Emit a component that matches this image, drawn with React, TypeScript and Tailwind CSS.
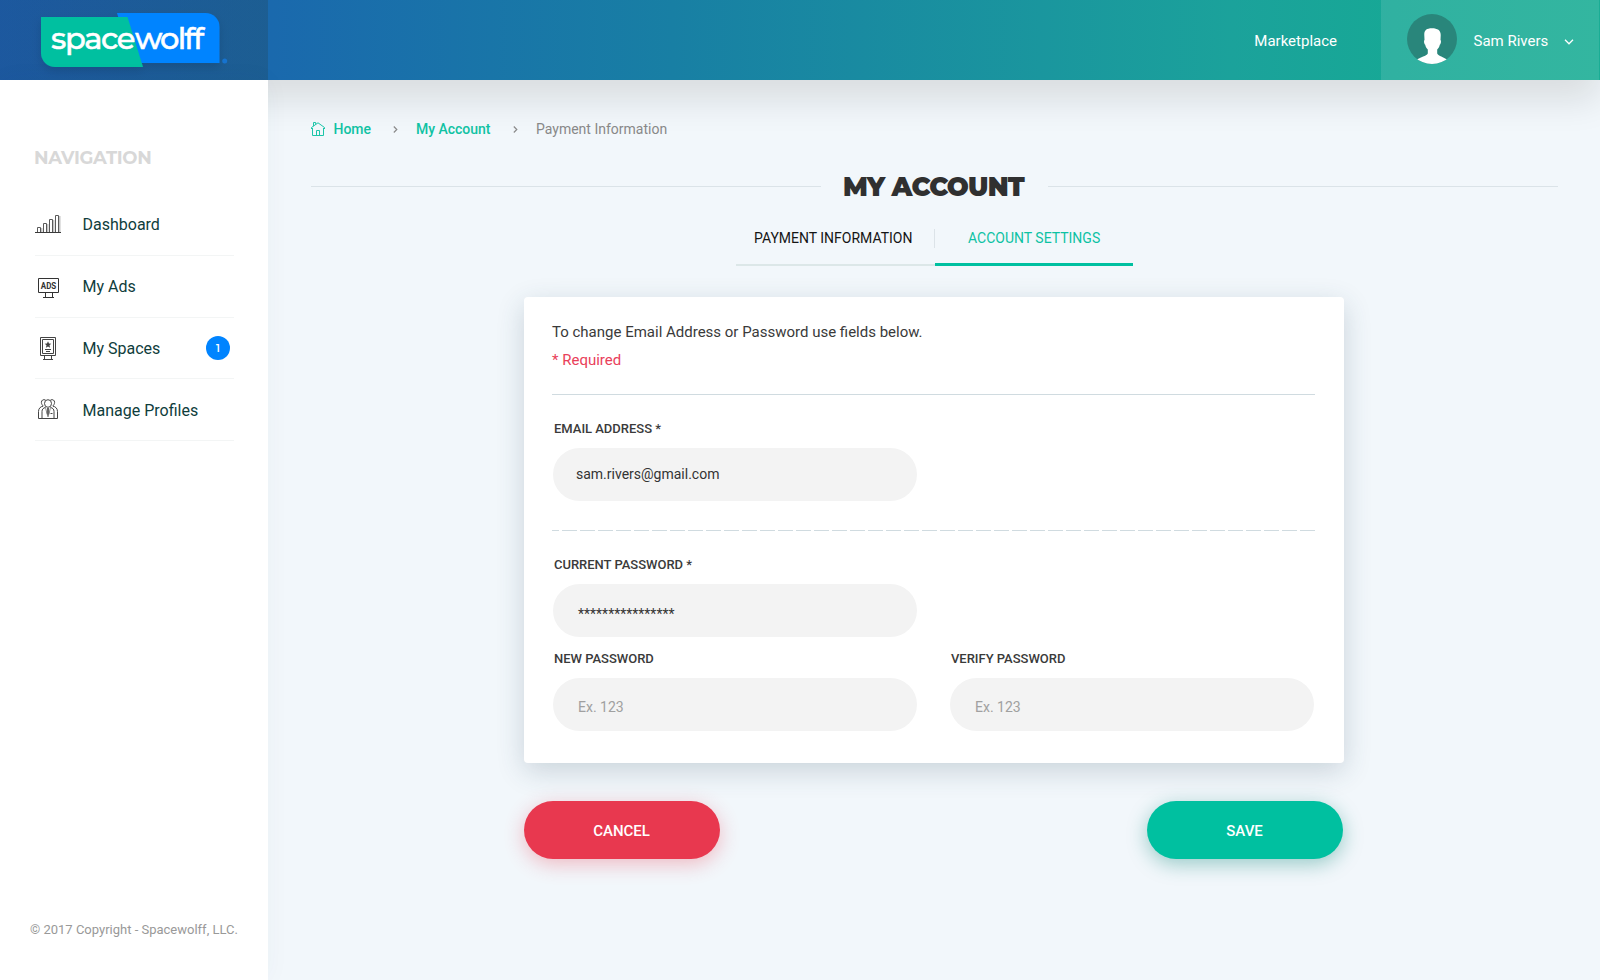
import React from "react";

function Logo() {
  return (
    <svg width="268" height="80" viewBox="0 0 268 80" aria-label="spacewolff">
      <defs>
        <filter id="logoShadow" x="-20%" y="-30%" width="140%" height="180%">
          <feDropShadow dx="0" dy="4" stdDeviation="5" floodColor="#000" floodOpacity="0.12" />
        </filter>
      </defs>
      <g filter="url(#logoShadow)">
        <path d="M117 13H205.500a14 14 0 0 1 14 14V63H133Z" fill="#0084ff" />
        <path d="M41 17H127.500L143 67H55a14 14 0 0 1-14-14Z" fill="#00c0a0" />
      </g>
      <g className="[font-variant-ligatures:none]" fontFamily="Montserrat, Inter, sans-serif" fontWeight="500" fontSize="30.500" fill="#fff" stroke="#fff" strokeWidth="0.500">
        <text x="51" y="48.500" textLength="84.500" lengthAdjust="spacing">space</text>
        <text x="135" y="48.500" textLength="69" lengthAdjust="spacing">wolff</text>
      </g>
      <circle cx="224.700" cy="61" r="2.500" fill="#1673cf" />
    </svg>
  );
}

function BarsIcon() {
  return (
    <svg className="mb-[2px]" width="26" height="18" viewBox="0 0 26 18" fill="none">
      <path d="M6 13h1.500v4H6zM12 9h1.500v8H12zM18 5h1.500v12H18zM24 1h1.500v16H24z" fill="#c4c4c4" />
      <path d="M2.500 17v-4.500h3V17M8.500 17V8.500h3V17M14.500 17V4.500h3V17M20.500 17V.5h3V17" stroke="#5a5a5a" />
      <path d="M0 17.500h26" stroke="#3a3a3a" />
    </svg>
  );
}

function AdsIcon() {
  return (
    <svg className="mt-[2px] ml-[2px]" width="22" height="20" viewBox="0 0 22 20" fill="none" stroke="#333">
      <path d="M.5.5h20v14H.5zM7.500 15v4M14.500 15v4M5 19.500h11" />
      <text x="2.800" y="10.800" fontFamily="Roboto, sans-serif" fontWeight="700" fontSize="9" textLength="15.500" lengthAdjust="spacingAndGlyphs" fill="#333" stroke="none">ADS</text>
    </svg>
  );
}

function SpacesIcon() {
  return (
    <svg className="mt-px" width="16" height="23" viewBox="0 0 16 23" fill="none" stroke="#444">
      <path d="M.5.5h15v18H.5zM2.500 2.500h11v14h-11zM4.500 19v3M11.500 19v3M3 22.500h10M5 12.500h6M6 14.500h4" />
      <path d="M8 4.300l1 2.300 2.300.2-1.800 1.500.6 2.400L8 9.400l-2.100 1.300.6-2.400-1.800-1.500 2.300-.2z" fill="#444" stroke="none" />
    </svg>
  );
}

function ProfilesIcon() {
  return (
    <svg className="mb-px" width="20" height="20" viewBox="0 0 20 20" fill="none" stroke="#444">
      <ellipse cx="10" cy="4.500" rx="3.500" ry="3.800" />
      <path d="M7.500 1C5.300 0 3.300 1.200 3.400 3.500c.1 1.500.8 2.500 1.800 3.500M12.500 1c2.200-1 4.200.2 4.100 2.500-.1 1.500-.8 2.500-1.800 3.500" />
      <path d="M5.200 7.200C2.500 7.500.5 9.500.5 12.500v7h19v-7c0-3-2-5-4.700-5.300" />
      <path d="M4 19v-6.500c0-2.300 1.200-3.500 3.500-4M16 19v-6.500c0-2.300-1.200-3.500-3.500-4" />
      <path d="M12.500 14.500h2" />
      <path d="M7.300 8.500L10 18l2.700-9.500" strokeOpacity="0.500" />
      <path d="M9 9h2l.5 5L10 17.500 8.500 14z" fill="#666" stroke="none" />
    </svg>
  );
}

function HomeIcon() {
  return (
    <svg width="14" height="14" viewBox="0 0 14 14" fill="none" stroke="#1cc5a8">
      <path d="M.5 7V5.500L7 .8l6.500 4.700V7M1.500 6v7.500h11V6M2.500 4.200V.5h2.200v2M5.500 13.500v-5h3v5" />
    </svg>
  );
}

function Crumb() {
  return (
    <svg width="5" height="8" viewBox="0 0 5 8" fill="none" stroke="#8a8a8a" strokeWidth="1.200">
      <path d="M.8 1.500l3 3-3 3" />
    </svg>
  );
}

function Avatar() {
  return (
    <svg width="50" height="50" viewBox="0 0 50 50">
      <defs>
        <clipPath id="avatarClip">
          <circle cx="25" cy="25" r="25" />
        </clipPath>
      </defs>
      <circle cx="25" cy="25" r="25" fill="#29867b" />
      <path
        clipPath="url(#avatarClip)"
        d="M25 14.300c5.800 0 9 2.300 8.700 7.200l-.2 4.500c.8.300.6 3.700-.7 4.800-.4 2-1.400 3.500-2.600 4.700v4c1.500 2.800 6.300 3.500 9.800 6V51H10v-5.500c3.500-2.500 9.300-3.200 10.800-6v-4c-1.200-1.200-2.200-2.700-2.600-4.700-1.300-1.100-1.500-4.500-.7-4.800l-.2-4.500c-.3-4.900 1.900-7.200 7.700-7.200z"
        fill="#fff"
      />
    </svg>
  );
}

const navItems = [
  { label: "Dashboard", icon: <BarsIcon />, height: "h-[62px]", labelPad: "pt-px" },
  { label: "My Ads", icon: <AdsIcon />, height: "h-[62px]", labelPad: "pt-px" },
  { label: "My Spaces", icon: <SpacesIcon />, height: "h-[61px]", labelPad: "pt-px", badge: "1" },
  { label: "Manage Profiles", icon: <ProfilesIcon />, height: "h-[62px]", labelPad: "pt-[3px]" },
];

function Header() {
  return (
    <header className="relative z-10 flex h-20 bg-[linear-gradient(90deg,#1b64b2_0%,#1a69ad_17%,#187fa4_42%,#1ba29b_77%,#17a896_87%,#1aad95_100%)] shadow-[0_20px_36px_rgba(20,20,0,0.11)]">
      <div className="h-20 w-[268px] bg-[linear-gradient(90deg,rgba(34,47,90,0.22),rgba(34,70,90,0.32))]">
        <Logo />
      </div>
      <div className="flex flex-1 items-center justify-end text-[15px] text-white">
        <a className="mr-[44px] pt-px leading-5">Marketplace</a>
        <div className="mr-px flex h-20 w-[218px] items-center bg-white/11 pl-[26px]">
          <div className="mb-[2px]">
            <Avatar />
          </div>
          <span className="ml-[16.500px] pt-px leading-5">Sam Rivers</span>
          <svg className="mt-[4px] ml-[15.500px]" width="10" height="6" viewBox="0 0 10 6" fill="none" stroke="#fff" strokeWidth="1.300">
            <path d="M1 .8l4 4 4-4" />
          </svg>
        </div>
      </div>
    </header>
  );
}

function Sidebar() {
  return (
    <aside className="relative z-20 flex w-[268px] shrink-0 flex-col bg-white shadow-[0_0_24px_rgba(30,70,100,0.04)]">
      <h2 className="mt-[67px] ml-[34px] font-[Montserrat,Inter,sans-serif] text-[18px] leading-[22px] font-bold tracking-[-0.3px] text-[#d8d8d8]">NAVIGATION</h2>
      <nav className="mt-[25px] ml-[35px] w-[199px]">
        {navItems.map((item) => (
          <a key={item.label} className={`flex items-center border-b border-[#f3f5f5] ${item.height}`}>
            <span className="flex w-[26px] justify-center">{item.icon}</span>
            <span className={`ml-[21.500px] text-[16px] leading-5 text-[#0f3d3c] ${item.labelPad}`}>{item.label}</span>
            {item.badge && (
              <span className="mr-1 ml-auto flex size-6 items-center justify-center rounded-full bg-[#0084ff] font-[Montserrat,Inter,sans-serif] text-[10px] font-semibold text-white">
                {item.badge}
              </span>
            )}
          </a>
        ))}
      </nav>
      <p className="mt-auto mb-[40px] ml-[30px] text-[13px] leading-5 text-[#999]">© 2017 Copyright - Spacewolff, LLC.</p>
    </aside>
  );
}

function Field({ label, children }: { label: string; children: React.ReactNode }) {
  return (
    <div className="w-[364px]">
      <div className="ml-px text-[13px] leading-4 font-medium tracking-[-0.02px] text-[#3a3a3a]">{label}</div>
      <div className="mt-[11px] flex h-[53px] items-center rounded-full bg-[#f3f3f3] text-[14px] text-[#333]">{children}</div>
    </div>
  );
}

export default function App() {
  return (
    <div className="flex h-[980px] w-[1600px] flex-col overflow-hidden bg-[#f2f7fb] font-[Roboto,sans-serif]">
      <Header />
      <div className="relative flex flex-1">
        <Sidebar />
        <main className="flex-1 pr-[42px] pl-[43px]">
          <div className="relative z-20 mt-[39px] flex h-5 items-center text-[14px] leading-5 font-medium tracking-[-0.04px] text-[#10c2a3]">
            <HomeIcon />
            <a className="ml-[8.500px] w-[37px]">Home</a>
            <span className="ml-[22px]"><Crumb /></span>
            <a className="ml-[18.500px] w-[74px] whitespace-nowrap">My Account</a>
            <span className="ml-[22.500px]"><Crumb /></span>
            <span className="ml-[18.500px] font-normal tracking-normal text-[#888]">Payment Information</span>
          </div>

          <div className="mt-[31px] flex h-8 items-center">
            <div className="h-px flex-1 bg-[#dbe3e8]" />
            <h1 className="w-[227px] pt-[2px] pr-[2px] text-center font-[Montserrat,Inter,sans-serif] text-[26px] leading-8 font-black tracking-[-0.8px] whitespace-nowrap text-[#303030]">MY ACCOUNT</h1>
            <div className="h-px flex-1 bg-[#dbe3e8]" />
          </div>

          <div className="mt-[20px] ml-[425px] flex h-[44px] w-[397px] text-[14px] leading-5">
            <a className="flex w-[199px] items-start justify-between border-b-2 border-[#dce7e8] pt-[6px] pl-[18px] text-[#151515]">
              <span>PAYMENT INFORMATION</span>
              <span className="mt-px h-[19px] w-px bg-[#dce3e8]" />
            </a>
            <a className="w-[198px] border-b-[3px] border-[#00c0a0] pt-[6px] pl-[33px] text-[#0dc2a3]">ACCOUNT SETTINGS</a>
          </div>

          <section className="mt-[31px] ml-[213px] h-[466px] w-[820px] rounded-[4px] bg-white px-7 shadow-[0_8px_28px_rgba(40,70,90,0.2)]">
            <div className="w-[763px] border-b border-[#d0dbe0] pt-[21px] pb-[16px] text-[15px] leading-7">
              <p className="text-[#3a3a3a]">To change Email Address or Password use fields below.</p>
              <p className="pb-[4px] text-[#e9405a]">* Required</p>
            </div>
            <div className="ml-px pt-[26px]">
              <Field label="EMAIL ADDRESS *">
                <span className="pl-[23px]">sam.rivers@gmail.com</span>
              </Field>
            </div>
            <div className="mt-[29px] h-px w-[763px] bg-[repeating-linear-gradient(90deg,#d0dbe0_0_15px,transparent_15px_18px)] bg-[position:-8px_0] bg-[size:900px_1px]" />
            <div className="mt-[26px] ml-px">
              <Field label="CURRENT PASSWORD *">
                <span className="pt-[7px] pl-[25px]">****************</span>
              </Field>
            </div>
            <div className="mt-[14px] ml-px flex gap-[33px]">
              <Field label="NEW PASSWORD">
                <span className="pt-[5px] pl-[25px] text-[#a0a0a0]">Ex. 123</span>
              </Field>
              <Field label="VERIFY PASSWORD">
                <span className="pt-[5px] pl-[25px] text-[#a0a0a0]">Ex. 123</span>
              </Field>
            </div>
          </section>

          <div className="mt-[38px] ml-[213px] flex w-[819px] justify-between text-[15px] font-medium tracking-[-0.05px] text-white">
            <button className="h-[58px] w-[196px] rounded-full bg-[#e8384f] pt-[2px] pr-px shadow-[0_5px_20px_rgba(232,56,79,0.32)]">CANCEL</button>
            <button className="h-[58px] w-[196px] rounded-full bg-[#00c0a0] pt-[2px] pr-px shadow-[0_5px_20px_rgba(0,130,115,0.38)]">SAVE</button>
          </div>
        </main>
      </div>
    </div>
  );
}
